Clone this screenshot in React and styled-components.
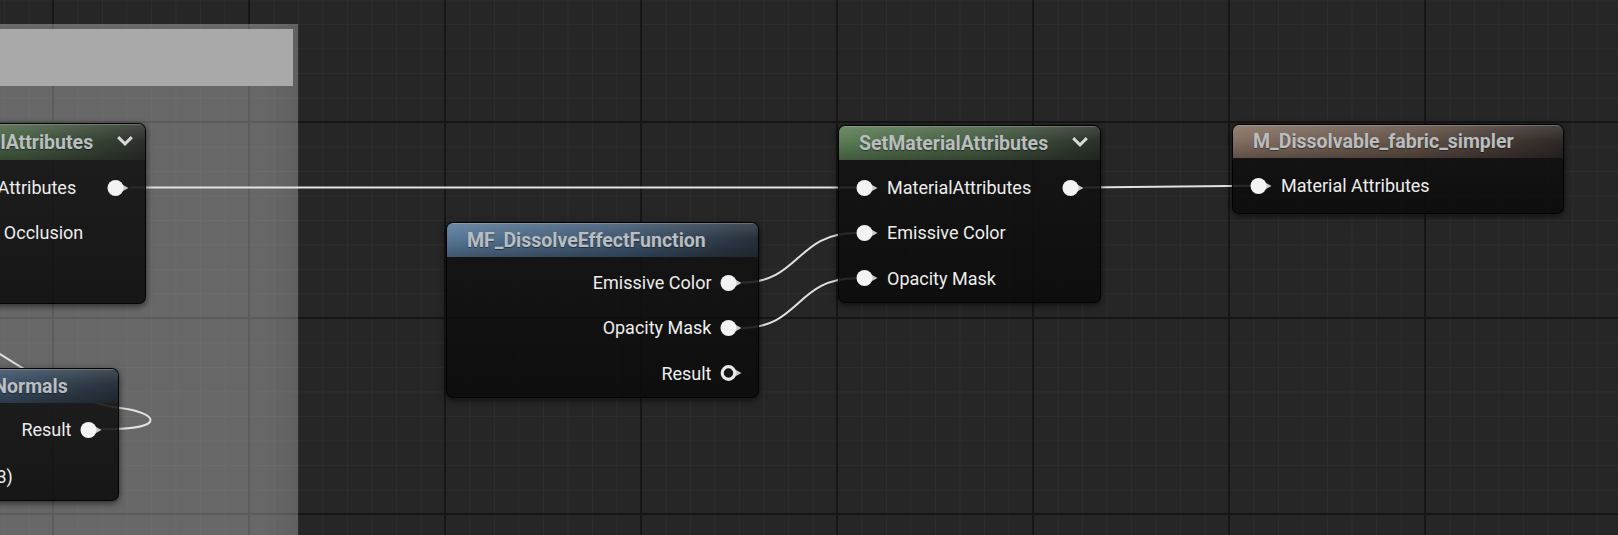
import React from "react";
import styled, { createGlobalStyle } from "styled-components";

const GlobalStyle = createGlobalStyle`
  *, *::before, *::after { box-sizing: border-box; }
  html, body { margin: 0; padding: 0; background: #262626; }
  body { font-family: Roboto, "Liberation Sans", sans-serif; }
`;

// editor grid: major line every 196px, 8 minor lines between
const Canvas = styled.div`
  position: relative;
  width: 1618px;
  height: 535px;
  overflow: hidden;
  background-color: #262626;
  background-image:
    linear-gradient(to right, #161616 2px, transparent 2px),
    linear-gradient(to bottom, #161616 2px, transparent 2px),
    linear-gradient(to right, #2d2d2d 1px, transparent 1px),
    linear-gradient(to bottom, #2d2d2d 1px, transparent 1px);
  background-size: 196px 196px, 196px 196px, 24.5px 24.5px, 24.5px 24.5px;
  background-position: 52px 0, 0 121px, 4px 0, 0 24px;
`;

const CommentBox = styled.div`
  position: absolute;
  left: -240px;
  top: 24px;
  width: 538px;
  height: 600px;
  padding: 5px;
  background: linear-gradient(
    to right,
    rgba(255, 255, 255, 0.3) 93%,
    rgba(255, 255, 255, 0.27)
  );
`;

const CommentTitle = styled.div`
  height: 57px;
  background: #a9a9a9;
`;

const WireLayer = styled.svg`
  position: absolute;
  left: 0;
  top: 0;
  overflow: visible;
`;

const Wire = styled.path`
  fill: none;
  stroke: #e2e2e2;
  stroke-width: 2;
`;

const tints = {
  green: ["#62865b", "#4b6446", "#2e342d"],
  blue: ["#5f82a5", "#45607c", "#2b343f"],
  brown: ["#90796a", "#6b584d", "#332d2a"],
};

const NodeBox = styled.div`
  position: absolute;
  left: ${(p) => p.$x}px;
  top: ${(p) => p.$y}px;
  width: ${(p) => p.$w}px;
  border-radius: 7px;
  border: 1px solid rgba(0, 0, 0, 0.85);
  background: linear-gradient(
    to bottom,
    rgba(20, 20, 20, 0.88),
    rgba(11, 11, 11, 0.88)
  );
  box-shadow: 0 2px 7px rgba(0, 0, 0, 0.6);
  overflow: hidden;
`;

const Header = styled.div`
  height: ${(p) => p.$h}px;
  display: flex;
  align-items: center;
  justify-content: space-between;
  padding: 0 11px 0 20px;
  background:
    linear-gradient(
      to bottom,
      rgba(255, 255, 255, 0.14),
      rgba(255, 255, 255, 0) 45%,
      rgba(0, 0, 0, 0.28)
    ),
    linear-gradient(
      to right,
      ${(p) => tints[p.$tint][0]},
      ${(p) => tints[p.$tint][1]} 55%,
      ${(p) => tints[p.$tint][2]}
    );
  box-shadow: inset 0 1px 0 rgba(255, 255, 255, 0.22);
  opacity: 0.92;
`;

const Title = styled.span`
  font-size: 19.5px;
  font-weight: 700;
  color: #c9cdd0;
  white-space: nowrap;
  text-shadow: 0 1px 1px rgba(0, 0, 0, 0.45);
`;

const ChevronSvg = styled.svg`
  flex: none;
  margin-bottom: 3px;
`;

const Body = styled.div`
  display: flex;
  flex-direction: column;
  padding: ${(p) => p.$pad};
`;

const Row = styled.div`
  height: ${(p) => p.$h}px;
  display: flex;
  align-items: center;
  justify-content: space-between;
  padding: 0 16.5px;
`;

const Side = styled.div`
  display: flex;
  align-items: center;
  gap: ${(p) => (p.$out ? 8 : 9.5)}px;
`;

const Label = styled.span`
  font-size: 18px;
  color: #ededed;
  white-space: nowrap;
`;

const PinSvg = styled.svg`
  flex: none;
  display: block;
`;

function Pin({ hollow }) {
  return (
    <PinSvg width="22" height="18" viewBox="0 0 22 18">
      <polygon points="15.2,5.4 21.5,9 15.2,12.6" fill="#c8c8c8" />
      {hollow ? (
        <circle cx="8.5" cy="9" r="6.3" fill="#151515" stroke="#e8e8e8" strokeWidth="3.2" />
      ) : (
        <circle cx="8.5" cy="9" r="8" fill="#f3f3f3" />
      )}
    </PinSvg>
  );
}

function Chevron() {
  return (
    <ChevronSvg width="18" height="11" viewBox="0 0 18 11">
      <path d="M2.2 2.2 L9 8.8 L15.8 2.2" fill="none" stroke="#e8e8e8" strokeWidth="3" />
    </ChevronSvg>
  );
}

function Node({ x, y, w, tint, title, chevron, rows, headH = 34, pad = "5px 0 1px", rowH = 45.3 }) {
  return (
    <NodeBox $x={x} $y={y} $w={w}>
      <Header $tint={tint} $h={headH}>
        <Title>{title}</Title>
        {chevron && <Chevron />}
      </Header>
      <Body $pad={pad}>
        {rows.map((r, i) => (
          <Row key={i} $h={rowH}>
            <Side>
              {r.in !== undefined && (
                <>
                  <Pin />
                  <Label>{r.in}</Label>
                </>
              )}
            </Side>
            <Side $out>
              {r.out !== undefined && (
                <>
                  {r.out && <Label>{r.out}</Label>}
                  <Pin hollow={r.hollow} />
                </>
              )}
            </Side>
          </Row>
        ))}
      </Body>
    </NodeBox>
  );
}

const wires = [
  "M 130 187.6 L 856 187.6",
  "M 1084 187.6 L 1253 185.7",
  "M 742 282.6 C 800 282.6, 796 233, 856 233",
  "M 742 328 C 800 328, 796 278.3, 856 278.3",
  "M 100 429 C 172 430, 156 412, 120 408 C 88 404, 45 383, 0 354 L -40 327",
];

export default function App() {
  return (
    <>
      <GlobalStyle />
      <Canvas>
        <CommentBox>
          <CommentTitle />
        </CommentBox>

        <WireLayer width="1618" height="535">
          {wires.map((d, i) => (
            <Wire key={i} d={d} />
          ))}
        </WireLayer>

        <Node
          x={-117}
          y={123}
          w={263}
          tint="green"
          title="SetMaterialAttributes"
          chevron
          headH={36}
          pad="5px 0 2px"
          rows={[{ in: "MaterialAttributes", out: "" }, { in: "Ambient Occlusion" }, { in: "Normal" }]}
        />

        <Node
          x={-215}
          y={368}
          w={334}
          tint="blue"
          title="BlendAngleCorrectedNormals"
          pad="3px 0 0"
          rowH={47}
          rows={[{ in: "BaseNormal (V3)", out: "Result" }, { in: "AdditionalNormal (V3)" }]}
        />

        <Node
          x={446}
          y={222}
          w={313}
          tint="blue"
          title="MF_DissolveEffectFunction"
          pad="3px 0 1px"
          rows={[{ out: "Emissive Color" }, { out: "Opacity Mask" }, { out: "Result", hollow: true }]}
        />

        <Node
          x={838}
          y={125}
          w={263}
          tint="green"
          title="SetMaterialAttributes"
          chevron
          rows={[{ in: "MaterialAttributes", out: "" }, { in: "Emissive Color" }, { in: "Opacity Mask" }]}
        />

        <Node
          x={1232}
          y={124}
          w={332}
          tint="brown"
          title="M_Dissolvable_fabric_simpler"
          headH={33}
          pad="5px 0 5px"
          rows={[{ in: "Material Attributes" }]}
        />
      </Canvas>
    </>
  );
}
